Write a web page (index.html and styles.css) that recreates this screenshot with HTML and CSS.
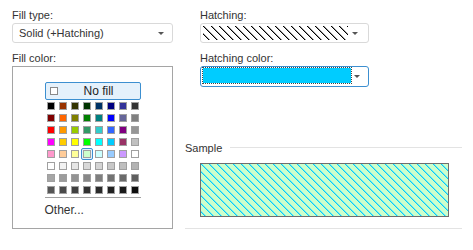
FILE: index.html
```html
<!DOCTYPE html>
<html lang="en">
<head>
	<meta charset="UTF-8">
	<title>Fill</title>
	<link rel="stylesheet" href="styles.css">
</head>
<body>
	<section class="dialog">

		<div class="column">
			<label class="caption">Fill type:</label>
			<div class="combo">
				<span>Solid (+Hatching)</span>
				<span class="arrow"></span>
			</div>

			<label class="caption">Fill color:</label>
			<div class="palette-box">
				<div class="palette">
					<div class="no-fill">
						<span class="check"></span>
						<span class="no-fill-text">No fill</span>
					</div>
					<div class="swatches" id="swatches"></div>
					<div class="sep"></div>
					<div class="other">Other...</div>
				</div>
			</div>
		</div>

		<div class="column">
			<div class="field">
				<label class="caption">Hatching:</label>
				<div class="combo hatch-combo">
					<svg class="hatch-preview" width="145" height="14">
						<defs>
							<pattern id="hatchBlack" width="8" height="8" patternUnits="userSpaceOnUse">
								<path fill="#999" shape-rendering="crispEdges" d="M1 0h1v1h-1zM2 1h1v1h-1zM3 2h1v1h-1zM4 3h1v1h-1zM5 4h1v1h-1zM6 5h1v1h-1zM7 6h1v1h-1zM0 7h1v1h-1z"/>
								<path fill="#000" shape-rendering="crispEdges" d="M0 0h1v1h-1zM1 1h1v1h-1zM2 2h1v1h-1zM3 3h1v1h-1zM4 4h1v1h-1zM5 5h1v1h-1zM6 6h1v1h-1zM7 7h1v1h-1z"/>
							</pattern>
						</defs>
						<rect width="145" height="14" fill="url(#hatchBlack)"/>
					</svg>
					<span class="arrow"></span>
				</div>

				<label class="caption">Hatching color:</label>
				<div class="combo color-combo">
					<span class="focus"><span class="color-fill"></span></span>
					<span class="arrow"></span>
				</div>
			</div>

			<div class="sample">
				<div class="sample-head">
					<span>Sample</span>
					<span class="line"></span>
				</div>
				<div class="sample-box">
					<svg width="247" height="52">
						<defs>
							<pattern id="hatchCyan" width="8" height="8" patternUnits="userSpaceOnUse">
								<path fill="#77e8e8" shape-rendering="crispEdges" d="M1 0h1v1h-1zM2 1h1v1h-1zM3 2h1v1h-1zM4 3h1v1h-1zM5 4h1v1h-1zM6 5h1v1h-1zM7 6h1v1h-1zM0 7h1v1h-1z"/>
								<path fill="#00ccff" shape-rendering="crispEdges" d="M0 0h1v1h-1zM1 1h1v1h-1zM2 2h1v1h-1zM3 3h1v1h-1zM4 4h1v1h-1zM5 5h1v1h-1zM6 6h1v1h-1zM7 7h1v1h-1z"/>
							</pattern>
						</defs>
						<rect width="247" height="52" fill="url(#hatchCyan)"/>
					</svg>
				</div>
			</div>
		</div>

	</section>
	<script>
		let colors = [
			'#000000', '#993300', '#333300', '#003300', '#003366', '#000080', '#333399', '#333333',
			'#800000', '#ff6600', '#808000', '#008000', '#008080', '#0000ff', '#666699', '#808080',
			'#ff0000', '#ff9900', '#99cc00', '#339966', '#33cccc', '#3366ff', '#800080', '#969696',
			'#ff00ff', '#ffcc00', '#ffff00', '#00ff00', '#00ffff', '#00ccff', '#993366', '#c0c0c0',
			'#ff99cc', '#ffcc99', '#ffff99', '#ccffcc', '#ccffff', '#99ccff', '#cc99ff', '#ffffff',
			'#ffffff', '#f2f2f2', '#e6e6e6', '#d9d9d9', '#d4d4d4', '#c8c8c8', '#bfbfbf', '#b3b3b3',
			'#a6a6a6', '#9c9c9c', '#939393', '#888888', '#7f7f7f', '#737373', '#6a6a6a', '#5f5f5f',
			'#555555', '#4a4a4a', '#404040', '#333333', '#2a2a2a', '#222222', '#1a1a1a', '#0d0d0d'
		];

		let grid = document.querySelector('#swatches');

		colors.forEach((color, i) => {
			let cell = document.createElement('div');
			cell.className = i === 35 ? 'cell selected' : 'cell';

			let swatch = document.createElement('span');
			swatch.className = 'swatch';
			swatch.style.backgroundColor = color;

			cell.appendChild(swatch);
			grid.appendChild(cell);
		});
	</script>
</body>
</html>
```

FILE: styles.css
```css
* {
	box-sizing: border-box;
}

body {
	margin: 0;
	background-color: #fff;
	color: #333;
	font-family: "Liberation Sans", Arial, sans-serif;
	font-size: 11px;
}

.dialog {
	display: grid;
	grid-template-columns: 161px 277px;
	column-gap: 12px;
	padding: 8px 0 0 12px;
}

.caption {
	display: block;
	height: 15px;
	line-height: 15px;
}

.combo {
	display: flex;
	align-items: center;
	height: 20px;
	padding-left: 6px;
	border: 1px solid #d9d9d9;
	border-radius: 3px;
	background-color: #fff;
}

.combo + .caption {
	margin-top: 8px;
}

.arrow {
	width: 0;
	height: 0;
	margin-left: auto;
	margin-right: 8px;
	border-left: 3px solid transparent;
	border-right: 3px solid transparent;
	border-top: 3px solid #555;
}

/* fill colour palette */

.palette-box {
	height: 163px;
	padding-top: 15px;
	border: 1px solid #a5a5a5;
}

.palette {
	width: 96px;
	margin: 0 auto;
}

.no-fill {
	display: flex;
	align-items: center;
	height: 18px;
	padding-left: 4px;
	border: 1px solid #3c8fd0;
	border-radius: 2px;
	background-color: #e5f1fb;
}

.check {
	width: 8px;
	height: 8px;
	border: 1px solid #8a8a8a;
	background-color: #fff;
}

.no-fill-text {
	flex: 1;
	text-align: center;
	font-size: 12px;
	color: #222;
}

.swatches {
	display: grid;
	grid-template-columns: repeat(8, 12px);
	grid-auto-rows: 12px;
}

.cell {
	display: flex;
	align-items: center;
	justify-content: center;
}

.cell.selected {
	border: 1px solid #3c8fd0;
	border-radius: 2px;
	background-color: #e5f1fb;
}

.swatch {
	width: 8px;
	height: 8px;
	border: 1px solid #a0a0a0;
}

.sep {
	height: 1px;
	margin-top: 1px;
	background-color: #a0a0a0;
}

.other {
	padding-top: 4px;
	line-height: 16px;
	font-size: 12px;
}

/* hatching */

.field {
	width: 169px;
	margin-left: 15px;
}

.hatch-combo {
	padding: 2px;
}

.hatch-preview {
	display: block;
}

.color-combo {
	height: 21px;
	padding: 0 0 1px 1px;
	border-color: #3c8fd0;
	align-items: flex-start;
}

.color-combo .arrow {
	align-self: center;
}

.focus {
	display: block;
	width: 150px;
	height: 17px;
	border: 1px dotted #444;
}

.color-fill {
	display: block;
	height: 100%;
	background-color: #00ccff;
}

/* sample */

.sample {
	margin-top: 53px;
	padding-bottom: 11px;
	border-bottom: 1px solid #e3e3e3;
}

.sample-head {
	display: flex;
	align-items: center;
	gap: 8px;
	height: 15px;
}

.sample-head .line {
	flex: 1;
	height: 1px;
	background-color: #e3e3e3;
}

.sample-box {
	width: 249px;
	height: 54px;
	margin: 8px 0 0 15px;
	border: 1px solid #6e6e6e;
	background-color: #ccffcc;
}

.sample-box svg {
	display: block;
}
```
